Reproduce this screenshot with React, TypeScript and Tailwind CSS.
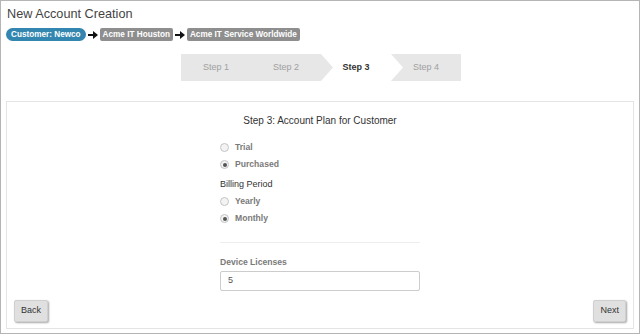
import React from "react";

function Radio({ label, checked }: { label: string; checked?: boolean }) {
  return (
    <div className="flex items-center h-[17px]">
      <span className="w-[9px] h-[9px] rounded-full border border-[#c4c4c4] bg-[#f3f3f3] flex items-center justify-center">
        {checked && <span className="w-[4px] h-[4px] rounded-full bg-[#555]" />}
      </span>
      <span className="ml-[6px] text-[8.6px] font-bold text-[#7a7a7a]">{label}</span>
    </div>
  );
}

function Arrow() {
  return (
    <svg width="10" height="8" viewBox="0 0 10 8" className="mx-[2px]">
      <path d="M0 3h5V0l5 4-5 4V5H0z" fill="#111" />
    </svg>
  );
}

export default function App() {
  return (
    <div
      className="w-[640px] h-[334px] border border-[#b5b5b5] bg-white flex flex-col px-[5px] pt-[4px]"
      style={{ fontFamily: '"Liberation Sans", Arial, sans-serif' }}
    >
      <div className="text-[12.7px] leading-[18px] text-[#444] pl-[1px]">New Account Creation</div>
      <div className="flex items-center mt-[5px] h-[13px]">
        <span className="h-[13px] px-[5px] rounded-full bg-[#3386b0] text-white text-[8.2px] font-bold leading-[13px]">Customer: Newco</span>
        <Arrow />
        <span className="h-[13px] px-[3px] rounded-[2px] bg-[#8e8e8e] text-white text-[8.2px] font-bold leading-[13px]">Acme IT Houston</span>
        <Arrow />
        <span className="h-[13px] px-[3px] rounded-[2px] bg-[#8e8e8e] text-white text-[8.2px] font-bold leading-[13px]">Acme IT Service Worldwide</span>
      </div>
      <div className="mt-[13px] self-center ml-[2px] w-[280px] h-[27px] bg-[#e7e7e7] flex relative text-[9px]">
        <div className="w-[70px] shrink-0 flex items-center justify-center text-[#a0a0a0]">Step 1</div>
        <div className="w-[70px] shrink-0 flex items-center justify-center text-[#a0a0a0]">Step 2</div>
        <div
          className="w-[82px] shrink-0 -mr-[12px] pr-[12px] bg-white flex items-center justify-center font-bold text-[#333] relative z-10"
          style={{ clipPath: "polygon(0 0, 70px 0, 82px 50%, 70px 100%, 0 100%, 12px 50%)" }}
        >
          Step 3
        </div>
        <div className="w-[70px] shrink-0 flex items-center justify-center text-[#a0a0a0]">Step 4</div>
      </div>
      <div className="mt-[20px] flex-1 mb-[4px] border border-[#e4e4e4] flex flex-col">
        <div className="text-center text-[10px] text-[#333] mt-[12px] leading-[14px]">Step 3: Account Plan for Customer</div>
        <div className="w-[200px] mx-auto mt-[11px] flex flex-col">
          <Radio label="Trial" />
          <Radio label="Purchased" checked />
          <div className="text-[9px] text-[#333] mt-[5px] h-[13px] leading-[13px]">Billing Period</div>
          <div className="mt-[2px]">
            <Radio label="Yearly" />
            <Radio label="Monthly" checked />
          </div>
          <div className="h-px bg-[#eeeeee] mt-[15px]" />
          <div className="text-[8.6px] font-bold text-[#7a7a7a] mt-[13px] leading-[13px]">Device Licenses</div>
          <div className="mt-[2px] h-[20px] border border-[#cccccc] rounded-[2px] flex items-center px-[7px] text-[9px] text-[#555]">5</div>
        </div>
        <div className="mt-auto flex justify-between px-[7px] pb-[6px]">
          <button className="h-[22px] px-[6px] bg-[#e0e0e0] border border-[#cfcfcf] rounded-[2px] text-[9px] text-[#333] shadow-[1px_1px_2px_rgba(0,0,0,0.35)]">Back</button>
          <button className="h-[22px] px-[6px] bg-[#e0e0e0] border border-[#cfcfcf] rounded-[2px] text-[9px] text-[#333] shadow-[1px_1px_2px_rgba(0,0,0,0.35)]">Next</button>
        </div>
      </div>
    </div>
  );
}
